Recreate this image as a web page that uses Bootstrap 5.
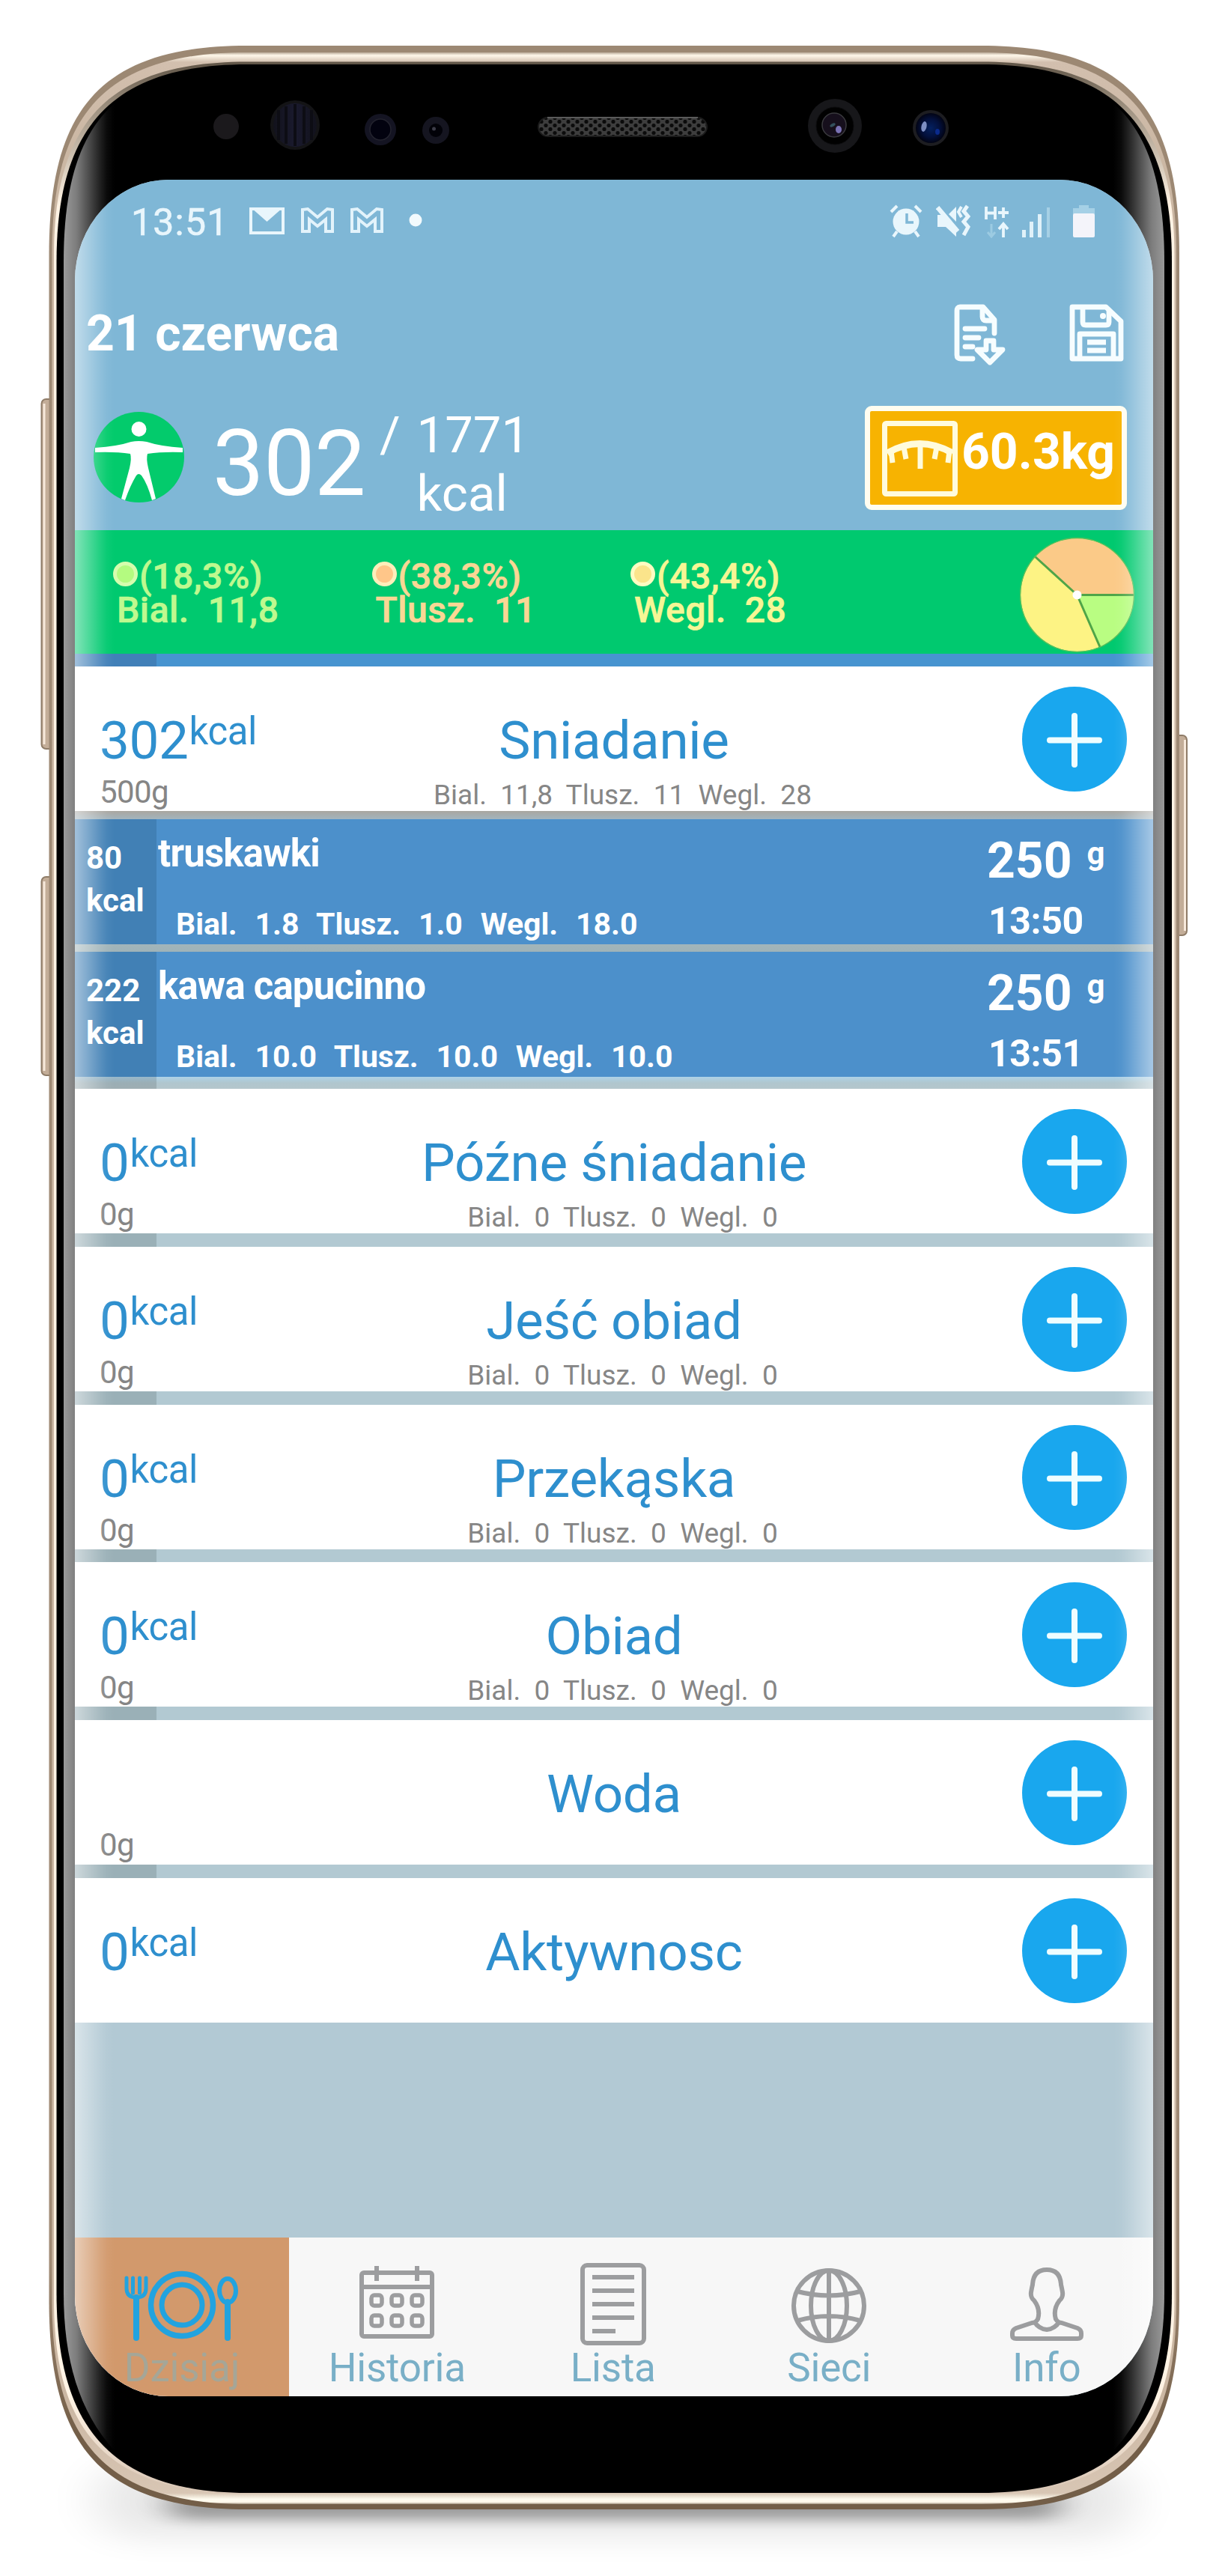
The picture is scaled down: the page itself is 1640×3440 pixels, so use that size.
<!DOCTYPE html>
<html lang="pl">
<head>
<meta charset="utf-8">
<meta name="viewport" content="width=device-width, initial-scale=1">
<title>21 czerwca</title>
<link href="https://cdn.jsdelivr.net/npm/bootstrap@5.3.0/dist/css/bootstrap.min.css" rel="stylesheet">
<style>
  body{margin:0;background:#fff;font-family:Roboto,"Noto Sans",sans-serif;}
  svg{display:block;flex:none}
  .device{width:1640px;height:3440px;padding:240px 100px;overflow:hidden}
  .shell,.glare{left:0;top:0;width:1640px;height:3440px}
  .glare{pointer-events:none}
  .display{width:1440px;height:2960px;border-radius:125px/135px;overflow:hidden;background:#b2c9d4;position:relative}
  .t{line-height:1;white-space:pre}
  .topblock{background:#7fb7d6;height:468px;color:#fff}
  .statusbar{height:120px;padding:32px 77px 0 75px;color:#e9f6fc}
  .clock{font-size:50px;width:158px;letter-spacing:1.2px;-webkit-text-stroke:.6px #e9f6fc}
  .mail-a{margin-left:21px}.mail-b{margin-left:20px}.more-dot{margin-left:33px}
  .gap-17{margin-left:17px}.gap-15{margin-left:15px}.gap-28{margin-left:28px}
  .titlebar{height:140px;padding:45px 39px 0 15px}
  .day{font-size:66px;font-weight:700;padding-top:8px}
  .save{margin-left:83px}
  .summary{height:208px;padding:42px 35px 0 25px}
  .figure-pic{margin-top:8px}
  .total{font-size:122px;padding-top:17px;margin-left:38px;letter-spacing:-.6px}
  .goal{font-size:67px;line-height:78px}
  .goal-sep{margin-left:19px}.goal-val{margin-left:22px}
  .weight{width:350px;height:139px;border:7px solid #fffdf0;border-radius:9px;background:#f7b301;padding:13px 0 0 16px;font-size:66px;font-weight:700}
  .weight .t{padding-top:9px;margin-left:5px}
  .macros{background:#00c96f;height:165px;padding:0 25px 0 51px;font-size:48px;font-weight:500}
  .macro{width:345.5px;padding-top:39px;-webkit-text-stroke:.7px currentColor}
  .macro div{line-height:45px;white-space:pre;letter-spacing:.55px}
  .macro .ps-1{padding-left:5px!important}
  .pip{width:33px;height:33px;border-radius:50%;border:5px solid #d9fdb4;flex:none;margin-top:3px;margin-right:2px}
  .c-b{color:#bff98f}.c-b .pip{background:#b4fb80;border-color:#d6fdae}
  .c-t{color:#f9d795}.c-t .pip{background:#ffc689;border-color:#fdeebb}
  .c-w{color:#f6f695}.c-w .pip{background:#fbe48b;border-color:#fffbc2}
  .pie{margin-top:9px}
  .strip{height:17px;background:linear-gradient(90deg,#4180b8 109px,#4794d0 109px)}
  .meal{height:193px;background:#fff;color:#2e8fce;flex:none}
  .side{width:300px}
  .kc{padding:61px 0 0 33px}
  .kc-none{padding:146px 0 0 33px}
  .num{font-size:71px;padding-top:2px;letter-spacing:-.4px}
  .unit{font-size:51px;margin-left:1px;letter-spacing:-.4px}
  .grams{font-size:42px;color:#858585;margin-top:13px;letter-spacing:-.6px}
  .nm{font-size:71px;padding-top:63px;letter-spacing:-.3px}
  .sub-l{font-size:37px;color:#868686;margin-top:19px;padding-left:23px}
  .plus{width:140px;height:140px;border-radius:50%;background:#19a7ee;margin:27px 35px 0 auto}
  .food{height:167px;background:#4c90cb;color:#fff;font-weight:700}
  .kcol{width:109px;height:167px;background:#4180b5;padding:23px 0 0 15px;font-size:42px;line-height:57px}
  .f-name{font-size:51px;padding:20px 0 0 2px;letter-spacing:-.85px}
  .f-macro{font-size:41px;padding:49px 0 0 26px;word-spacing:1.7px}
  .f-side{width:222px;padding-top:23px}
  .f-qty{height:82px;font-size:66px}
  .f-unit{font-size:42px;margin-left:20px;padding-top:2px}
  .f-time{font-size:50px;padding:6px 0 0 2px;letter-spacing:-.4px}
  .rule-a{height:11px;background:linear-gradient(#a9a6a0,#a3b4bd)}
  .rule-b{height:10px;background:linear-gradient(#a2b5ba,#9fb3b8)}
  .rule-c{height:16px;background:linear-gradient(90deg,#0000001f 109px,transparent 109px),linear-gradient(#add2e8,#b0c6ce 50%,#b4c6cc)}
  .later{gap:17.8px;background:linear-gradient(90deg,#9ab0b7 109px,#b2c9d2 109px)}
  .tabs{height:212px;background:#f7f7f7;border:0}
  .tab{color:#79afc7;font-size:53px;line-height:1;width:288.5px}
  .tab svg{margin-top:30px}
  .tab .t{margin-top:3px;letter-spacing:-.2px}
  .tab.on{background:#d2996c;color:#a5a697;width:286px}
</style>
<script src="https://cdn.jsdelivr.net/npm/bootstrap@5.3.0/dist/js/bootstrap.bundle.min.js"></script>
</head>
<body>
<div class="device position-relative">

  <!-- phone body -->
  <svg class="shell position-absolute" viewBox="0 0 1640 3440" aria-hidden="true">
    <defs>
      <linearGradient id="rim" x1="0" y1="61" x2="0" y2="3351" gradientUnits="userSpaceOnUse">
        <stop offset="0" stop-color="#9c8873"/><stop offset=".9" stop-color="#a08a74"/><stop offset=".97" stop-color="#735e48"/><stop offset="1" stop-color="#735e48"/>
      </linearGradient>
      <linearGradient id="metal" x1="0" y1="70" x2="0" y2="3344" gradientUnits="userSpaceOnUse">
        <stop offset="0" stop-color="#b9aa98"/><stop offset=".0012" stop-color="#fff8ea"/><stop offset=".004" stop-color="#d2bfae"/><stop offset=".04" stop-color="#cbb7a3"/><stop offset=".96" stop-color="#cbb7a3"/><stop offset=".9955" stop-color="#d8c6b4"/><stop offset=".998" stop-color="#fffcf0"/><stop offset=".9992" stop-color="#fff8ea"/><stop offset="1" stop-color="#a39582"/>
      </linearGradient>
      <linearGradient id="lip" x1="0" y1="82" x2="0" y2="3331" gradientUnits="userSpaceOnUse">
        <stop offset="0" stop-color="#5f5446"/><stop offset=".02" stop-color="#a09382"/><stop offset=".06" stop-color="#fff3e4"/><stop offset=".96" stop-color="#fff3e4"/><stop offset="1" stop-color="#d8c5b4"/>
      </linearGradient>
      <pattern id="mesh" width="12" height="10" patternUnits="userSpaceOnUse">
        <rect width="12" height="10" fill="#3d3d3d"/><circle cx="3" cy="2.5" r="2.6" fill="#0b0b0b"/><circle cx="9" cy="7.5" r="2.6" fill="#0b0b0b"/>
      </pattern>
      <linearGradient id="irid"><stop offset="0" stop-color="#12121c"/><stop offset=".5" stop-color="#1a1a2e"/><stop offset="1" stop-color="#12121c"/></linearGradient>
      <radialGradient id="blue"><stop offset="0" stop-color="#04205f"/><stop offset=".6" stop-color="#03103c"/><stop offset="1" stop-color="#020414"/></radialGradient>
      <filter id="b1" x="-10%" y="-200%" width="120%" height="500%"><feGaussianBlur stdDeviation="22 8"/></filter>
      <filter id="b2" x="-20%" y="-60%" width="140%" height="220%"><feGaussianBlur stdDeviation="34 20"/></filter>
    </defs>
    <rect x="130" y="3290" width="1380" height="98" rx="45" fill="#000" opacity=".09" filter="url(#b2)"/>
    <rect x="225" y="3325" width="1190" height="40" rx="18" fill="#000" opacity=".32" filter="url(#b1)"/>
    <g fill="#c3ad98" stroke="#8f7c68" stroke-width="2">
      <rect x="55.500" y="533" width="22" height="467" rx="6"/><rect x="55.500" y="1171" width="22" height="265" rx="6"/><rect x="1563" y="982" width="22" height="267" rx="6"/>
    </g>
    <path d="M59 539V994M59 1177V1430M1582.500 988V1243" stroke="#f7e9db" stroke-width="3"/>
    <path fill="url(#rim)" d="M65.500 340C65.500 150 130 61 330 61H1310C1510 61 1575 150 1575 340V3072C1575 3262 1510 3351 1310 3351H330C130 3351 65.500 3262 65.500 3072Z"/>
    <path fill="url(#metal)" d="M69.500 340C69.500 160 133 70 330 70H1310C1507 70 1571 160 1571 340V3072C1571 3252 1507 3344 1310 3344H330C133 3344 69.500 3252 69.500 3072Z"/>
    <path fill="url(#lip)" d="M72 342C72 170 138 82.500 330 82.500H1310C1502 82.500 1568.500 170 1568.500 342V3070C1568.500 3242 1502 3330 1310 3330H330C138 3330 72 3242 72 3070Z"/>
    <path fill="#000" d="M75.500 350C75.500 176 144 86 330 86H1310C1496 86 1565 176 1565 350V3062C1565 3236 1496 3329 1310 3329H330C144 3329 75.500 3236 75.500 3062Z"/>
    <circle cx="302" cy="169" r="17" fill="#1b191c"/>
    <circle cx="394" cy="167" r="33" fill="#141416"/><circle cx="394" cy="167" r="29" fill="url(#irid)"/>
    <path d="M372 147V187M382 142V192M394 139V195M406 142V192M416 147V187" stroke="#0d0d14" stroke-width="4"/>
    <circle cx="508" cy="173" r="21" fill="#141422"/><circle cx="508" cy="173" r="14" fill="#02020f" stroke="#23232e" stroke-width="1.500"/>
    <circle cx="582" cy="174" r="18" fill="#151520"/><circle cx="582" cy="174" r="9" fill="#020208"/><circle cx="579.500" cy="172" r="2.500" fill="#3c3c48"/>
    <rect x="719" y="157" width="225" height="25" rx="12.500" fill="url(#mesh)" stroke="#1c1c1c" stroke-width="2"/>
    <path d="M731 157H932" stroke="#5a5a5a" stroke-width="2"/>
    <circle cx="1115" cy="168" r="36" fill="#17171a"/><circle cx="1115" cy="168" r="25" fill="#010101" stroke="#0c0c0e"/><circle cx="1114" cy="167" r="16" fill="#160f1c" stroke="#3a3a3e" stroke-width="1.500"/>
    <ellipse cx="1120" cy="173" rx="4" ry="5" fill="#7a72b4"/><ellipse cx="1112" cy="167" rx="4" ry="2" fill="#33505c" transform="rotate(-30 1112 167)"/>
    <circle cx="1243" cy="171" r="24" fill="#1d1d21"/><circle cx="1243" cy="171" r="20" fill="url(#blue)"/>
    <ellipse cx="1234" cy="169" rx="3.500" ry="7" fill="#7d8fc4" transform="rotate(12 1234 169)"/><ellipse cx="1252" cy="176" rx="3" ry="4" fill="#0a2a8c"/>
  </svg>

  <main class="display d-flex flex-column">
    <header class="topblock">
      <div class="statusbar d-flex align-items-start">
        <span class="t clock">13:51</span>
        <svg width="47" height="46" viewBox="0 0 47 46"><rect x="2" y="7" width="43" height="32" fill="none" stroke="#e9f6fc" stroke-width="4"/><path d="M3 6H44L23.500 24Z" fill="#e9f6fc"/></svg>
        <svg class="mail-a" width="46" height="46" viewBox="0 0 46 46"><path d="M3 37V8L10 7L23 18L36 7L43 8V37H34V21L23 30L12 21V37Z" fill="none" stroke="#e3f3fb" stroke-width="4"/></svg>
        <svg class="mail-b" width="46" height="46" viewBox="0 0 46 46"><path d="M3 37V8L10 7L23 18L36 7L43 8V37H34V21L23 30L12 21V37Z" fill="none" stroke="#e3f3fb" stroke-width="4"/></svg>
        <svg class="more-dot" width="18" height="46" viewBox="0 0 18 46"><circle cx="9" cy="22" r="8.500" fill="#f2fafd"/></svg>
        <svg class="ms-auto" width="46" height="46" viewBox="0 0 46 46"><g fill="none" stroke="#e9f6fc" stroke-width="4"><path d="M3 11L11 3M43 11L35 3M11 37L6 44M35 37L40 44"/></g><circle cx="23" cy="24" r="17.500" fill="#e9f6fc"/><path d="M24 13V25H33" fill="none" stroke="#7fb7d6" stroke-width="3.500"/></svg>
        <svg class="gap-17" width="46" height="46" viewBox="0 0 46 46"><path d="M2 15H9L27 33V44L13 31H2ZM17 14L27 4V24Z" fill="#e9f6fc"/><path d="M2 5L29 37" stroke="#e9f6fc" stroke-width="6"/><path d="M42 3L37 10L43 17L37 24L43 31L37 42" fill="none" stroke="#e9f6fc" stroke-width="5"/><path d="M34 4L30 11L34 18" fill="none" stroke="#e9f6fc" stroke-width="4"/></svg>
        <svg class="gap-17" width="36" height="46" viewBox="0 0 36 46"><path d="M4 4V21M16 4V21M4 12.500H16M20 12H34M27 5V19M27 45V28M21 34L27 27L33 34" fill="none" stroke="#e9f6fc" stroke-width="3.800"/><path d="M11 27V44M6 38L11 44L16 38" fill="none" stroke="#9ccbe2" stroke-width="3"/></svg>
        <svg class="gap-15" width="40" height="46" viewBox="0 0 40 46"><path d="M3.500 35V45M13.500 24V45M24.500 14V45" stroke="#e0f1f9" stroke-width="5"/><path d="M36 5V45" stroke="#a6d0e5" stroke-width="4"/></svg>
        <svg class="gap-28" width="31" height="46" viewBox="0 0 31 46"><path d="M9 2H22V6H30V14H1V6H9Z" fill="#a5d0e6"/><rect x="1" y="13" width="29" height="32" rx="2" fill="#f4f4fa"/></svg>
      </div>
      <div class="titlebar d-flex align-items-start">
        <h1 class="t day m-0">21 czerwca</h1>
        <svg class="ms-auto" width="72" height="84" viewBox="0 0 72 84"><g fill="none" stroke="#f6fdff" stroke-width="6.800" stroke-linejoin="round" stroke-linecap="round"><path d="M55 40V22L40 5H9Q5 5 5 10V69Q5 74 10 74H26"/><path d="M39 6V18Q39 23 44 23H54"/><path d="M16 34H42M16 46H34M16 58H26"/><path d="M44 50H54V62H66L49 79L32 62H44Z"/></g></svg>
        <svg class="save" width="73" height="84" viewBox="0 0 73 84"><g fill="none" stroke="#f6fdff" stroke-width="6.800" stroke-linejoin="round"><path d="M4 5H49L69 24V74H4Z"/><path d="M18 6V25Q18 29 22 29H49Q53 29 53 25V8"/><path d="M14 72V41H59V72"/><path d="M24 52H49M24 63H49"/></g><circle cx="45" cy="17" r="4" fill="#f6fdff"/></svg>
      </div>
      <div class="summary d-flex align-items-start">
        <svg class="figure-pic" width="121" height="121" viewBox="0 0 121 121"><circle cx="60.500" cy="60.500" r="60.500" fill="#03cb6c"/><circle cx="60.500" cy="23" r="10" fill="#fff"/><path d="M2 48Q32 46 50 40Q60 38 71 40Q89 46 119 48V54Q92 53 72 56Q70 62 73 75L83 116L78 118Q72 96 64 85Q60 81 57 85Q49 98 42 118L37 116L48 75Q51 62 49 56Q29 53 2 54Z" fill="#fff"/></svg>
        <span class="t total">302</span>
        <span class="t goal goal-sep">/</span>
        <span class="t goal goal-val">1771
kcal</span>
        <div class="weight d-flex align-items-start ms-auto">
          <svg width="101" height="101" viewBox="0 0 101 101"><g fill="none" stroke="#fffbdc" stroke-width="7"><rect x="3.500" y="3.500" width="94" height="94" rx="2"/><path d="M7 43Q50 18 94 43" stroke-width="9"/><path d="M51 30V64M29 35L32 51M73 35L70 51M12 40L14 56M90 40L88 56" stroke-width="7"/></g></svg>
          <span class="t">60.3kg</span>
        </div>
      </div>
    </header>

    <section class="macros d-flex align-items-start">
      <div class="macro c-b"><div class="d-flex"><span class="pip"></span><span>(18,3%)</span></div><div class="ps-1">Bial.  11,8</div></div>
      <div class="macro c-t"><div class="d-flex"><span class="pip"></span><span>(38,3%)</span></div><div class="ps-1">Tlusz.  11</div></div>
      <div class="macro c-w"><div class="d-flex"><span class="pip"></span><span>(43,4%)</span></div><div class="ps-1">Wegl.  28</div></div>
      <svg class="pie ms-auto" width="153" height="155" viewBox="-76.500 -77.500 153 155">
        <circle r="75.500" fill="#fdf384"/><path d="M0 0H75.500A75.500 75.500 0 0 0 -56 -50.600Z" fill="#fbca88"/><path d="M0 0H75.500A75.500 75.500 0 0 1 30.500 69Z" fill="#b9fd82"/>
        <path d="M0 0H76M0 0L-56 -51M0 0L30.500 69.500" stroke="#4fa548" stroke-width="3"/><circle r="76" fill="none" stroke="#5cc05a" stroke-width="1.500"/><circle r="6" fill="#fff"/>
      </svg>
    </section>
    <div class="strip"></div>

    <section class="meal d-flex">
      <div class="side kc"><div class="d-flex align-items-start"><span class="t num">302</span><span class="t unit">kcal</span></div><div class="t grams">500g</div></div>
      <div class="flex-grow-1 text-center"><div class="t nm">Sniadanie</div><div class="t sub-l">Bial.  11,8  Tlusz.  11  Wegl.  28</div></div>
      <div class="side"><div class="plus"><svg width="140" height="140"><path d="M70 39V104M37 71.500H103" stroke="#effdff" stroke-width="8" stroke-linecap="round"/></svg></div></div>
    </section>
    <div class="rule-a"></div>
    <article class="food d-flex">
      <div class="kcol">80<br>kcal</div>
      <div class="flex-grow-1"><div class="t f-name">truskawki</div><div class="t f-macro">Bial.  1.8  Tlusz.  1.0  Wegl.  18.0</div></div>
      <div class="f-side"><div class="f-qty d-flex align-items-start"><span class="t">250</span><span class="t f-unit">g</span></div><div class="t f-time">13:50</div></div>
    </article>
    <div class="rule-b"></div>
    <article class="food d-flex">
      <div class="kcol">222<br>kcal</div>
      <div class="flex-grow-1"><div class="t f-name">kawa capucinno</div><div class="t f-macro">Bial.  10.0  Tlusz.  10.0  Wegl.  10.0</div></div>
      <div class="f-side"><div class="f-qty d-flex align-items-start"><span class="t">250</span><span class="t f-unit">g</span></div><div class="t f-time">13:51</div></div>
    </article>
    <div class="rule-c"></div>

    <div class="later d-flex flex-column">
      <section class="meal d-flex">
        <div class="side kc"><div class="d-flex align-items-start"><span class="t num">0</span><span class="t unit">kcal</span></div><div class="t grams">0g</div></div>
        <div class="flex-grow-1 text-center"><div class="t nm">Późne śniadanie</div><div class="t sub-l">Bial.  0  Tlusz.  0  Wegl.  0</div></div>
        <div class="side"><div class="plus"><svg width="140" height="140"><path d="M70 39V104M37 71.500H103" stroke="#effdff" stroke-width="8" stroke-linecap="round"/></svg></div></div>
      </section>
      <section class="meal d-flex">
        <div class="side kc"><div class="d-flex align-items-start"><span class="t num">0</span><span class="t unit">kcal</span></div><div class="t grams">0g</div></div>
        <div class="flex-grow-1 text-center"><div class="t nm">Jeść obiad</div><div class="t sub-l">Bial.  0  Tlusz.  0  Wegl.  0</div></div>
        <div class="side"><div class="plus"><svg width="140" height="140"><path d="M70 39V104M37 71.500H103" stroke="#effdff" stroke-width="8" stroke-linecap="round"/></svg></div></div>
      </section>
      <section class="meal d-flex">
        <div class="side kc"><div class="d-flex align-items-start"><span class="t num">0</span><span class="t unit">kcal</span></div><div class="t grams">0g</div></div>
        <div class="flex-grow-1 text-center"><div class="t nm">Przekąska</div><div class="t sub-l">Bial.  0  Tlusz.  0  Wegl.  0</div></div>
        <div class="side"><div class="plus"><svg width="140" height="140"><path d="M70 39V104M37 71.500H103" stroke="#effdff" stroke-width="8" stroke-linecap="round"/></svg></div></div>
      </section>
      <section class="meal d-flex">
        <div class="side kc"><div class="d-flex align-items-start"><span class="t num">0</span><span class="t unit">kcal</span></div><div class="t grams">0g</div></div>
        <div class="flex-grow-1 text-center"><div class="t nm">Obiad</div><div class="t sub-l">Bial.  0  Tlusz.  0  Wegl.  0</div></div>
        <div class="side"><div class="plus"><svg width="140" height="140"><path d="M70 39V104M37 71.500H103" stroke="#effdff" stroke-width="8" stroke-linecap="round"/></svg></div></div>
      </section>
      <section class="meal d-flex">
        <div class="side kc-none"><div class="t grams mt-0">0g</div></div>
        <div class="flex-grow-1 text-center"><div class="t nm">Woda</div></div>
        <div class="side"><div class="plus"><svg width="140" height="140"><path d="M70 39V104M37 71.500H103" stroke="#effdff" stroke-width="8" stroke-linecap="round"/></svg></div></div>
      </section>
      <section class="meal d-flex">
        <div class="side kc"><div class="d-flex align-items-start"><span class="t num">0</span><span class="t unit">kcal</span></div></div>
        <div class="flex-grow-1 text-center"><div class="t nm">Aktywnosc</div></div>
        <div class="side"><div class="plus"><svg width="140" height="140"><path d="M70 39V104M37 71.500H103" stroke="#effdff" stroke-width="8" stroke-linecap="round"/></svg></div></div>
      </section>
    </div>

    <nav class="tabs d-flex mt-auto flex-shrink-0">
      <a class="tab on d-flex flex-column align-items-center text-decoration-none" href="#">
        <svg width="156" height="115" viewBox="0 0 156 115"><g fill="none" stroke="#22a3df" stroke-linecap="round"><circle cx="78" cy="60" r="41.500" stroke-width="7.500"/><circle cx="78" cy="60" r="27" stroke-width="7"/><path d="M17 50V104M139 56V104" stroke-width="8"/><path d="M4 24V38Q4 50 17 50Q30 50 30 38V24M12.500 24V44M21.500 24V44" stroke-width="5"/><ellipse cx="139" cy="41" rx="11" ry="16" stroke-width="6"/></g></svg>
        <span class="t">Dzisiaj</span></a>
      <a class="tab d-flex flex-column align-items-center text-decoration-none" href="#">
        <svg width="102" height="115" viewBox="0 0 102 115"><g fill="none" stroke="#9c9d9f" stroke-width="6"><rect x="4" y="17" width="94" height="85" rx="3"/><path d="M4 36H98M24 8V28M78 8V28"/><g stroke-width="5.500"><rect x="17" y="47" width="14" height="14" rx="4"/><rect x="44" y="47" width="14" height="14" rx="4"/><rect x="71" y="47" width="14" height="14" rx="4"/><rect x="17" y="74" width="14" height="14" rx="4"/><rect x="44" y="74" width="14" height="14" rx="4"/><rect x="71" y="74" width="14" height="14" rx="4"/></g></g></svg>
        <span class="t">Historia</span></a>
      <a class="tab d-flex flex-column align-items-center text-decoration-none" href="#">
        <svg width="88" height="115" viewBox="0 0 88 115"><g fill="none" stroke="#9c9d9f" stroke-width="6"><rect x="3" y="7" width="82" height="104" rx="6"/><path d="M16 23H72M16 41H72M16 59H72M16 77H72M16 95H47"/></g></svg>
        <span class="t">Lista</span></a>
      <a class="tab d-flex flex-column align-items-center text-decoration-none" href="#">
        <svg width="100" height="115" viewBox="0 0 100 115"><g fill="none" stroke="#9c9d9f" stroke-width="6"><circle cx="50" cy="61" r="47"/><ellipse cx="50" cy="61" rx="24" ry="47"/><path d="M50 14V108M8 42Q50 53 92 42M8 81Q50 69 92 81"/></g></svg>
        <span class="t">Sieci</span></a>
      <a class="tab d-flex flex-column align-items-center text-decoration-none ps-1" href="#">
        <svg width="98" height="115" viewBox="0 0 98 115"><g fill="none" stroke="#9c9d9f" stroke-width="6" stroke-linejoin="round"><path d="M49 13Q67 13 68 33Q69 37 70 43Q71 50 66 54Q57 66 61 79Q64 84 69 84L90 91Q95 93 95 98V101Q95 105 90 105H8Q3 105 3 101V98Q3 93 8 91L29 84Q34 84 37 79Q41 66 32 54Q27 50 28 43Q29 37 30 33Q31 13 49 13Z"/><path d="M32 82Q38 92 49 93Q60 92 66 82"/></g></svg>
        <span class="t">Info</span></a>
    </nav>
  </main>

  <!-- curved glass highlight along both edges -->
  <svg class="glare position-absolute" viewBox="0 0 1640 3440" aria-hidden="true">
    <defs>
      <linearGradient id="gl"><stop offset="0" stop-color="#fff" stop-opacity=".6"/><stop offset=".25" stop-color="#fff" stop-opacity=".49"/><stop offset=".7" stop-color="#fff" stop-opacity=".14"/><stop offset=".85" stop-color="#fff" stop-opacity=".04"/><stop offset="1" stop-color="#fff" stop-opacity="0"/></linearGradient>
      <linearGradient id="gr"><stop offset="0" stop-color="#fff" stop-opacity="0"/><stop offset=".15" stop-color="#fff" stop-opacity=".04"/><stop offset=".3" stop-color="#fff" stop-opacity=".14"/><stop offset=".75" stop-color="#fff" stop-opacity=".49"/><stop offset="1" stop-color="#fff" stop-opacity=".6"/></linearGradient>
    </defs>
    <path fill="url(#gl)" d="M85 350C85 250 105 180 153 138V3273C105 3220 85 3150 85 3062Z"/>
    <path fill="url(#gr)" d="M1555 350C1555 250 1535 180 1487 138V3273C1535 3220 1555 3150 1555 3062Z"/>
  </svg>
</div>
</body>
</html>
